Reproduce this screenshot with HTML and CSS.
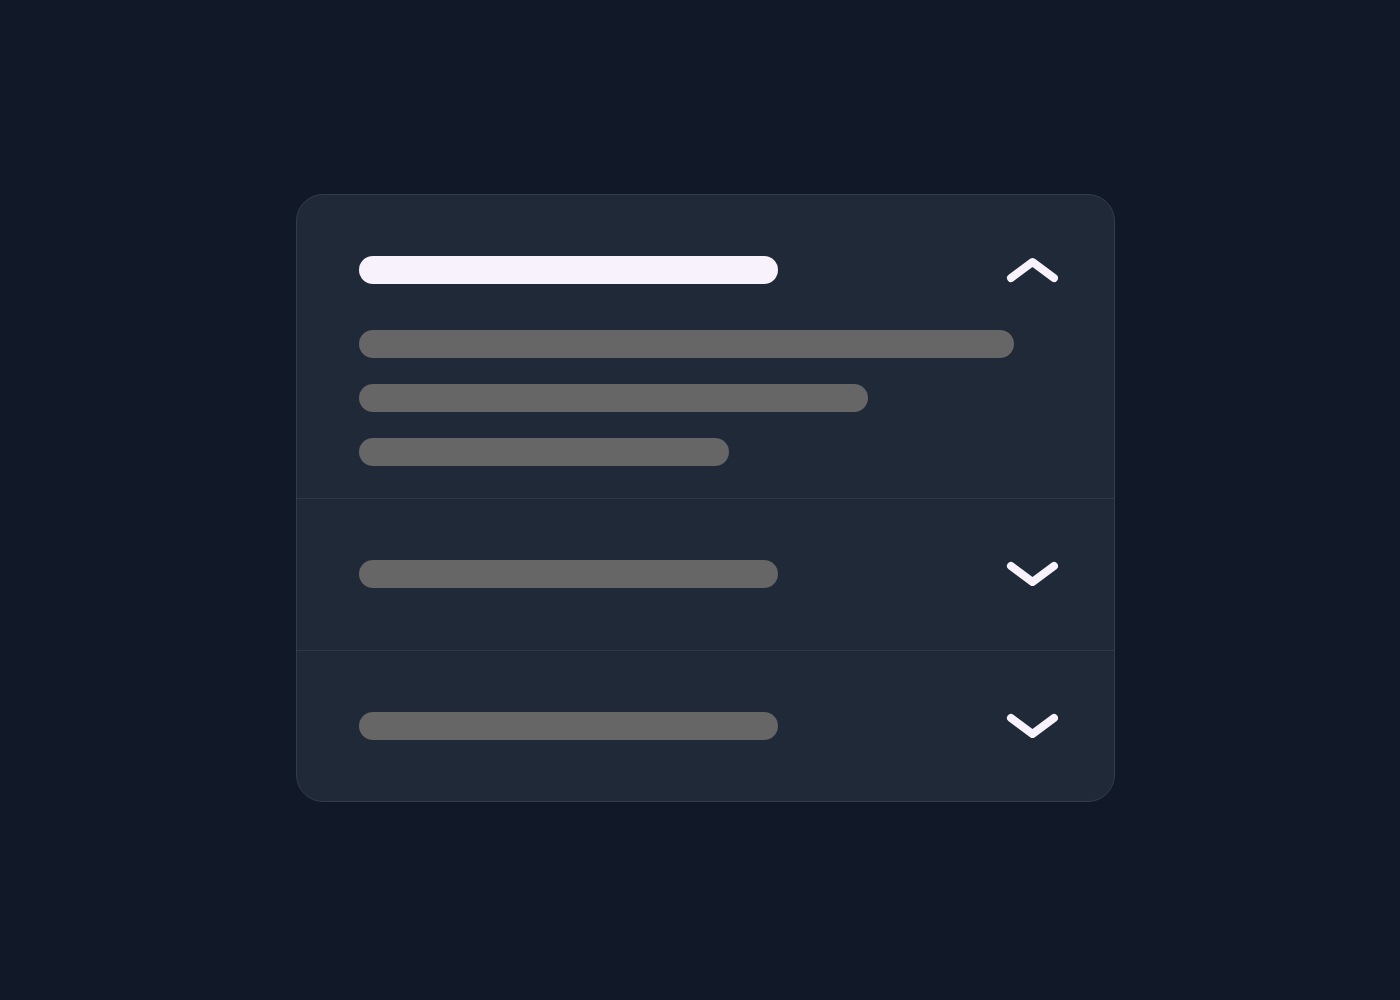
FILE: index.html
```html
<!DOCTYPE html>
<html lang="en">
<head>
  <meta charset="UTF-8" />
  <meta name="viewport" content="width=device-width, initial-scale=1.0"/>
  <title>Accordion</title>
  <link rel="stylesheet" href="styles.css">
</head>
<body>
  <div class="accordion">

    <div class="acc-item open">
      <div class="acc-head">
        <span class="bar bar-title"></span>
        <svg class="chevron" viewBox="0 0 52 28" width="52" height="28">
          <polyline points="5,22 26.5,6 48,22" />
        </svg>
      </div>
      <div class="acc-body">
        <span class="bar bar-line" style="width: 655px"></span>
        <span class="bar bar-line" style="width: 509px"></span>
        <span class="bar bar-line" style="width: 370px"></span>
      </div>
    </div>

    <div class="acc-item">
      <div class="acc-head">
        <span class="bar bar-muted"></span>
        <svg class="chevron" viewBox="0 0 52 28" width="52" height="28">
          <polyline points="5,6 26.5,22 48,6" />
        </svg>
      </div>
    </div>

    <div class="acc-item">
      <div class="acc-head">
        <span class="bar bar-muted"></span>
        <svg class="chevron" viewBox="0 0 52 28" width="52" height="28">
          <polyline points="5,6 26.5,22 48,6" />
        </svg>
      </div>
    </div>

  </div>
</body>
</html>
```

FILE: styles.css
```css
body {
  margin: 0;
  padding: 194px 0 0 296px;
  min-height: 100vh;
  box-sizing: border-box;
  background: #111827;
  font-family: 'Inter', sans-serif;
}
.accordion {
  width: 819px;
  box-sizing: border-box;
  background: #1f2937;
  border: 1px solid #323c4b;
  border-radius: 27px;
  overflow: hidden;
}
.acc-item {
  padding: 61px 56px 62px 62px;
  border-bottom: 1px solid #2e3848;
}
.acc-item:last-child {
  border-bottom: none;
  padding-bottom: 61px;
}
.acc-item.open {
  padding-bottom: 32px;
}
.acc-head {
  display: flex;
  align-items: center;
  justify-content: space-between;
  height: 28px;
}
.acc-body {
  display: flex;
  flex-direction: column;
  gap: 26px;
  margin-top: 46px;
}
.bar {
  display: block;
  height: 28px;
  border-radius: 14px;
}
.bar-title {
  width: 419px;
  background: #f7f2fb;
}
.bar-muted {
  width: 419px;
  background: #666666;
}
.bar-line {
  background: #666666;
}
.chevron {
  display: block;
  fill: none;
  stroke: #f7f2fb;
  stroke-width: 8;
  stroke-linecap: round;
  stroke-linejoin: round;
}
```
